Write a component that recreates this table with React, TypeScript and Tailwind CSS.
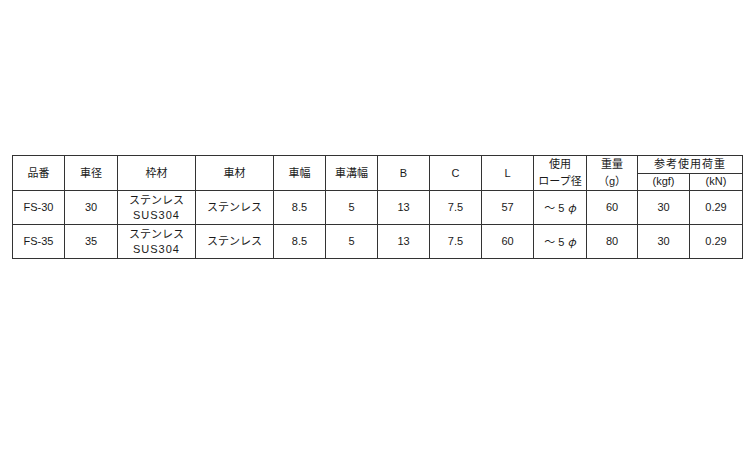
const font = { fontFamily: '"Liberation Sans", "Noto Sans CJK JP", sans-serif' };
const cjk = { fontFamily: '"Noto Sans CJK JP", sans-serif' };

const widths = [52, 53, 78, 78, 52, 52, 52, 52, 52, 53, 51, 52, 53];

const rows = [
  ["FS-30", "30", "frame", "ステンレス", "8.5", "5", "13", "7.5", "57", "rope", "60", "30", "0.29"],
  ["FS-35", "35", "frame", "ステンレス", "8.5", "5", "13", "7.5", "60", "rope", "80", "30", "0.29"],
];

const cell = "border border-[#333] text-center align-middle p-0 leading-[15px]";

export default function App() {
  return (
    <div className="w-[750px] h-[450px] bg-white pt-[155px] pl-[12px] text-[11px] text-[#1a1a1a]" style={font}>
      <table className="table-fixed border-collapse w-[731px]">
        <colgroup>
          {widths.map((w, i) => (
            <col key={i} style={{ width: w }} />
          ))}
        </colgroup>
        <thead>
          <tr className="h-[17px]">
            <th rowSpan={2} className={`${cell} font-normal`}>品番</th>
            <th rowSpan={2} className={`${cell} font-normal`}>車径</th>
            <th rowSpan={2} className={`${cell} font-normal`}>枠材</th>
            <th rowSpan={2} className={`${cell} font-normal`}>車材</th>
            <th rowSpan={2} className={`${cell} font-normal`}>車幅</th>
            <th rowSpan={2} className={`${cell} font-normal`}>車溝幅</th>
            <th rowSpan={2} className={`${cell} font-normal`}>B</th>
            <th rowSpan={2} className={`${cell} font-normal`}>C</th>
            <th rowSpan={2} className={`${cell} font-normal`}>L</th>
            <th rowSpan={2} className={`${cell} font-normal leading-[17px]`}>
              使用
              <br />
              ロープ径
            </th>
            <th rowSpan={2} className={`${cell} font-normal leading-[17px]`}>
              重量
              <br />
              （g）
            </th>
            <th colSpan={2} className={`${cell} font-normal tracking-[1px]`}>参考使用荷重</th>
          </tr>
          <tr className="h-[17px]">
            <th className={`${cell} font-normal`}>(kgf)</th>
            <th className={`${cell} font-normal`}>(kN)</th>
          </tr>
        </thead>
        <tbody>
          {rows.map((r, ri) => (
            <tr key={ri} className="h-[34px]">
              {r.map((v, ci) =>
                v === "frame" ? (
                  <td key={ci} className={cell}>
                    ステンレス
                    <br />
                    <span className="tracking-[1px]">SUS304</span>
                  </td>
                ) : v === "rope" ? (
                  <td key={ci} className={cell}>
                    ～ 5 <span style={cjk} className="italic">φ</span>
                  </td>
                ) : (
                  <td key={ci} className={cell}>
                    {v}
                  </td>
                )
              )}
            </tr>
          ))}
        </tbody>
      </table>
    </div>
  );
}
